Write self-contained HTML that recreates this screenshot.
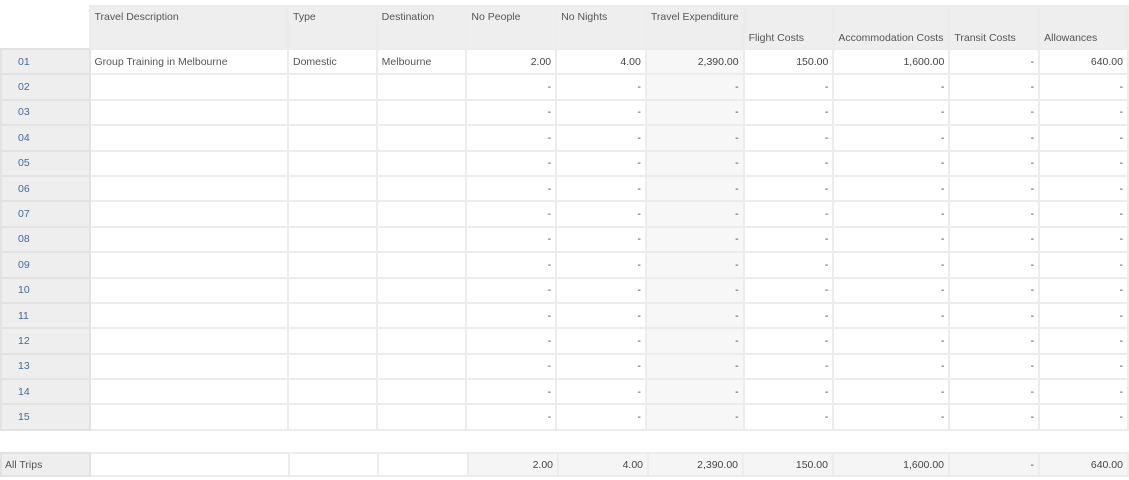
<!DOCTYPE html>
<html><head><meta charset="utf-8"><style>
body{margin:0;background:#fff;font-family:"Liberation Sans",sans-serif;font-size:10.5px;color:#555;}
table{position:absolute;left:0;border-collapse:collapse;table-layout:fixed;}
td{border:2px solid #ececec;padding:0 4px;white-space:nowrap;overflow:hidden;height:23.4px;}
td.r{text-align:right;color:#444}
td.h{background:#eeeeee;color:#3f6b98;padding-left:16px;border-color:#e2e2e2}
td.e{background:#f7f7f7}
thead td{background:#eeeeee;height:37px;vertical-align:top;padding-top:4px;color:#555}
thead td.b{vertical-align:bottom;padding-bottom:4px;padding-top:0}
thead td.c{background:#fff;border:none}
#t1{top:5px}
#t2{top:452px}
#t2 td{height:21px}
#t2 td.h{padding-left:3px;color:#555}
#t2 td.g{background:#f5f5f5}
</style></head><body>
<table id="t1">
<colgroup><col style="width:89px"><col style="width:199px"><col style="width:89px"><col style="width:90px"><col style="width:90px"><col style="width:90px"><col style="width:95px"><col style="width:90px"><col style="width:116px"><col style="width:90px"><col style="width:89px"></colgroup>
<thead><tr><td class="c"></td><td>Travel Description</td><td>Type</td><td>Destination</td><td>No People</td><td>No Nights</td><td>Travel Expenditure</td><td class="b">Flight Costs</td><td class="b">Accommodation Costs</td><td class="b">Transit Costs</td><td class="b">Allowances</td></tr></thead>
<tbody>
<tr><td class="h">01</td><td>Group Training in Melbourne</td><td>Domestic</td><td>Melbourne</td><td class="r">2.00</td><td class="r">4.00</td><td class="r e">2,390.00</td><td class="r">150.00</td><td class="r">1,600.00</td><td class="r">-</td><td class="r">640.00</td></tr>
<tr><td class="h">02</td><td></td><td></td><td></td><td class="r">-</td><td class="r">-</td><td class="r e">-</td><td class="r">-</td><td class="r">-</td><td class="r">-</td><td class="r">-</td></tr>
<tr><td class="h">03</td><td></td><td></td><td></td><td class="r">-</td><td class="r">-</td><td class="r e">-</td><td class="r">-</td><td class="r">-</td><td class="r">-</td><td class="r">-</td></tr>
<tr><td class="h">04</td><td></td><td></td><td></td><td class="r">-</td><td class="r">-</td><td class="r e">-</td><td class="r">-</td><td class="r">-</td><td class="r">-</td><td class="r">-</td></tr>
<tr><td class="h">05</td><td></td><td></td><td></td><td class="r">-</td><td class="r">-</td><td class="r e">-</td><td class="r">-</td><td class="r">-</td><td class="r">-</td><td class="r">-</td></tr>
<tr><td class="h">06</td><td></td><td></td><td></td><td class="r">-</td><td class="r">-</td><td class="r e">-</td><td class="r">-</td><td class="r">-</td><td class="r">-</td><td class="r">-</td></tr>
<tr><td class="h">07</td><td></td><td></td><td></td><td class="r">-</td><td class="r">-</td><td class="r e">-</td><td class="r">-</td><td class="r">-</td><td class="r">-</td><td class="r">-</td></tr>
<tr><td class="h">08</td><td></td><td></td><td></td><td class="r">-</td><td class="r">-</td><td class="r e">-</td><td class="r">-</td><td class="r">-</td><td class="r">-</td><td class="r">-</td></tr>
<tr><td class="h">09</td><td></td><td></td><td></td><td class="r">-</td><td class="r">-</td><td class="r e">-</td><td class="r">-</td><td class="r">-</td><td class="r">-</td><td class="r">-</td></tr>
<tr><td class="h">10</td><td></td><td></td><td></td><td class="r">-</td><td class="r">-</td><td class="r e">-</td><td class="r">-</td><td class="r">-</td><td class="r">-</td><td class="r">-</td></tr>
<tr><td class="h">11</td><td></td><td></td><td></td><td class="r">-</td><td class="r">-</td><td class="r e">-</td><td class="r">-</td><td class="r">-</td><td class="r">-</td><td class="r">-</td></tr>
<tr><td class="h">12</td><td></td><td></td><td></td><td class="r">-</td><td class="r">-</td><td class="r e">-</td><td class="r">-</td><td class="r">-</td><td class="r">-</td><td class="r">-</td></tr>
<tr><td class="h">13</td><td></td><td></td><td></td><td class="r">-</td><td class="r">-</td><td class="r e">-</td><td class="r">-</td><td class="r">-</td><td class="r">-</td><td class="r">-</td></tr>
<tr><td class="h">14</td><td></td><td></td><td></td><td class="r">-</td><td class="r">-</td><td class="r e">-</td><td class="r">-</td><td class="r">-</td><td class="r">-</td><td class="r">-</td></tr>
<tr><td class="h">15</td><td></td><td></td><td></td><td class="r">-</td><td class="r">-</td><td class="r e">-</td><td class="r">-</td><td class="r">-</td><td class="r">-</td><td class="r">-</td></tr>
</tbody></table>
<table id="t2">
<colgroup><col style="width:89px"><col style="width:199px"><col style="width:89px"><col style="width:90px"><col style="width:90px"><col style="width:90px"><col style="width:95px"><col style="width:90px"><col style="width:116px"><col style="width:90px"><col style="width:89px"></colgroup>
<tr><td class="h">All Trips</td><td></td><td></td><td></td><td class="r g">2.00</td><td class="r g">4.00</td><td class="r g">2,390.00</td><td class="r g">150.00</td><td class="r g">1,600.00</td><td class="r g">-</td><td class="r g">640.00</td></tr>
</table>
</body></html>
